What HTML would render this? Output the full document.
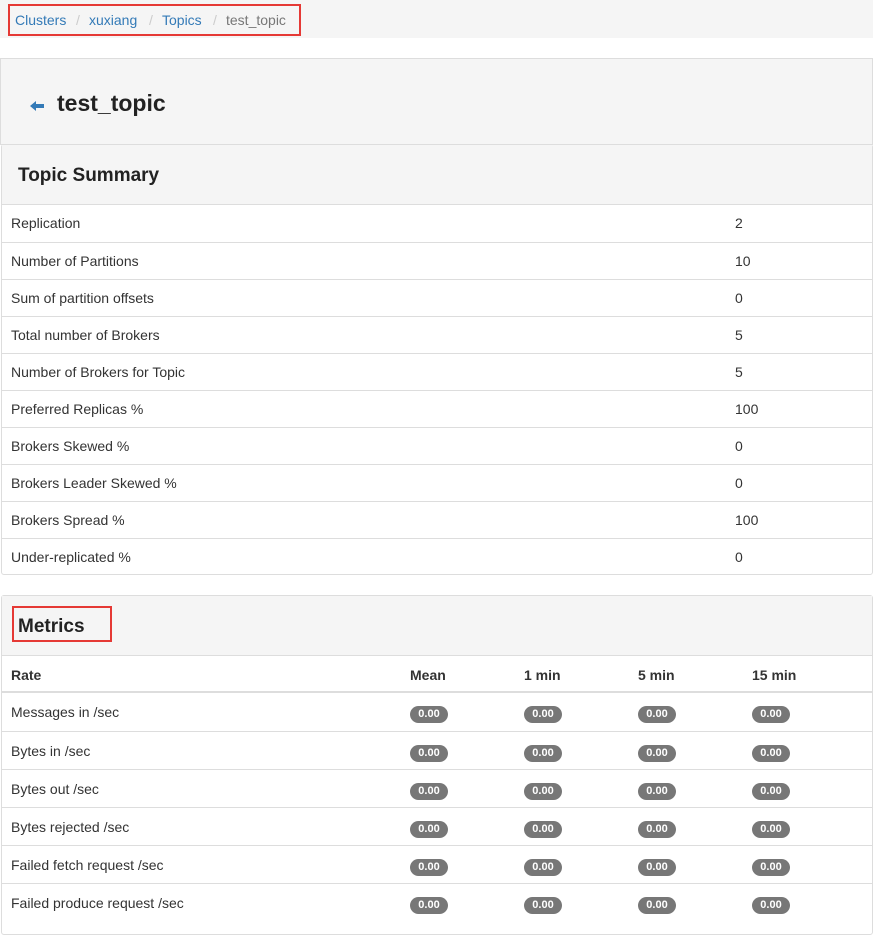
<!DOCTYPE html>
<html><head><meta charset="utf-8"><style>
*{box-sizing:border-box;margin:0;padding:0}
body{width:873px;height:922px;background:#fff;font-family:"Liberation Sans",sans-serif;color:#333;font-size:14px;position:relative;overflow:hidden}
.bc{position:absolute;left:0;top:0;width:873px;height:38px;background:#f5f5f5}
.bc .box{position:absolute;left:8px;top:4px;width:293px;height:32px;border:2px solid #e53935}
.bc span{position:absolute;top:12px;font-size:14px}
a{color:#337ab7;text-decoration:none}
.sep{color:#ccc}
.p1{position:absolute;left:0;top:58px;width:873px;height:87px;background:#f5f5f5;border:1px solid #ddd}
.p1 h1{position:absolute;left:56px;top:31px;font-size:23px;font-weight:bold;color:#222}
.arrow{position:absolute;left:29px;top:42px}
.panel{position:absolute;left:1px;width:872px;border:1px solid #ddd;border-radius:3px}
.ph{background:#f5f5f5;height:60px;border-bottom:1px solid #ddd;position:relative}
.ph h3{position:absolute;left:16px;top:20px;font-size:19px;font-weight:bold;color:#222}
.row{height:37px;border-top:1px solid #ddd;position:relative;font-size:14px}
.row span{position:absolute;top:10px}
.mrow{height:38px;border-top:1px solid #ddd;position:relative}
.mrow span{position:absolute;top:11px}
.hd{border-bottom:2px solid #ddd;font-weight:bold;height:37px}
.b{display:inline-block;background:#777;color:#fff;font-size:11px;font-weight:bold;width:38px;height:17px;line-height:17px;text-align:center;border-radius:9px;top:13px!important}
</style></head><body>
<div class="bc"><div class="box"></div>
<span style="left:15px"><a>Clusters</a></span>
<span class="sep" style="left:76px">/</span>
<span style="left:89px"><a>xuxiang</a></span>
<span class="sep" style="left:149px">/</span>
<span style="left:162px"><a>Topics</a></span>
<span class="sep" style="left:213px">/</span>
<span style="left:226px;color:#777">test_topic</span>
</div>
<div class="p1"><svg class="arrow" width="14" height="10" viewBox="0 0 14 10"><path d="M0 5 L6 0 L6 3 L14 3 L14 7 L6 7 L6 10Z" fill="#337ab7"/></svg><h1>test_topic</h1></div>
<div class="panel" style="top:144px;height:431px">
<div class="ph"><h3>Topic Summary</h3></div>
<div>
<div class="row" style="border-top:none"><span style="left:9px">Replication</span><span style="left:733px">2</span></div>
<div class="row"><span style="left:9px">Number of Partitions</span><span style="left:733px">10</span></div>
<div class="row"><span style="left:9px">Sum of partition offsets</span><span style="left:733px">0</span></div>
<div class="row"><span style="left:9px">Total number of Brokers</span><span style="left:733px">5</span></div>
<div class="row"><span style="left:9px">Number of Brokers for Topic</span><span style="left:733px">5</span></div>
<div class="row"><span style="left:9px">Preferred Replicas %</span><span style="left:733px">100</span></div>
<div class="row"><span style="left:9px">Brokers Skewed %</span><span style="left:733px">0</span></div>
<div class="row"><span style="left:9px">Brokers Leader Skewed %</span><span style="left:733px">0</span></div>
<div class="row"><span style="left:9px">Brokers Spread %</span><span style="left:733px">100</span></div>
<div class="row"><span style="left:9px">Under-replicated %</span><span style="left:733px">0</span></div>
</div></div>
<div class="panel" style="top:595px;height:340px">
<div class="ph"><h3>Metrics</h3><div style="position:absolute;left:10px;top:10px;width:100px;height:36px;border:2px solid #e53935"></div></div>
<div class="mrow hd" style="border-top:none"><span style="left:9px">Rate</span><span style="left:408px">Mean</span><span style="left:522px">1 min</span><span style="left:636px">5 min</span><span style="left:750px">15 min</span></div>
<div class="mrow" style="border-top:none"><span style="left:9px">Messages in /sec</span><span class="b" style="left:408px">0.00</span><span class="b" style="left:522px">0.00</span><span class="b" style="left:636px">0.00</span><span class="b" style="left:750px">0.00</span></div>
<div class="mrow"><span style="left:9px">Bytes in /sec</span><span class="b" style="left:408px">0.00</span><span class="b" style="left:522px">0.00</span><span class="b" style="left:636px">0.00</span><span class="b" style="left:750px">0.00</span></div>
<div class="mrow"><span style="left:9px">Bytes out /sec</span><span class="b" style="left:408px">0.00</span><span class="b" style="left:522px">0.00</span><span class="b" style="left:636px">0.00</span><span class="b" style="left:750px">0.00</span></div>
<div class="mrow"><span style="left:9px">Bytes rejected /sec</span><span class="b" style="left:408px">0.00</span><span class="b" style="left:522px">0.00</span><span class="b" style="left:636px">0.00</span><span class="b" style="left:750px">0.00</span></div>
<div class="mrow"><span style="left:9px">Failed fetch request /sec</span><span class="b" style="left:408px">0.00</span><span class="b" style="left:522px">0.00</span><span class="b" style="left:636px">0.00</span><span class="b" style="left:750px">0.00</span></div>
<div class="mrow"><span style="left:9px">Failed produce request /sec</span><span class="b" style="left:408px">0.00</span><span class="b" style="left:522px">0.00</span><span class="b" style="left:636px">0.00</span><span class="b" style="left:750px">0.00</span></div>
</div>
</body></html>
